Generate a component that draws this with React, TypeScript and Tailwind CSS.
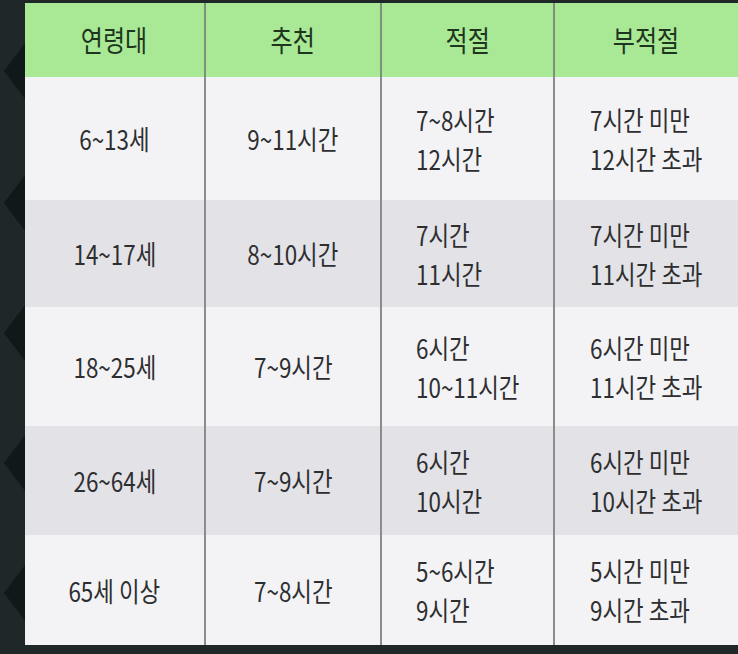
import React from 'react';

type Row = {
  age: string;
  rec: string;
  ok: string[];
  bad: string[];
  shade: boolean;
};

const rows: Row[] = [
  { age: '6~13세', rec: '9~11시간', ok: ['7~8시간', '12시간'], bad: ['7시간 미만', '12시간 초과'], shade: false },
  { age: '14~17세', rec: '8~10시간', ok: ['7시간', '11시간'], bad: ['7시간 미만', '11시간 초과'], shade: true },
  { age: '18~25세', rec: '7~9시간', ok: ['6시간', '10~11시간'], bad: ['6시간 미만', '11시간 초과'], shade: false },
  { age: '26~64세', rec: '7~9시간', ok: ['6시간', '10시간'], bad: ['6시간 미만', '10시간 초과'], shade: true },
  { age: '65세 이상', rec: '7~8시간', ok: ['5~6시간', '9시간'], bad: ['5시간 미만', '9시간 초과'], shade: false },
];

const heights = ['h-[123px]', 'h-[107px]', 'h-[119px]', 'h-[109px]', 'h-[110px]'];

const font = { fontFamily: '"Noto Sans CJK KR", "Noto Sans", sans-serif' };

function Squeeze({ children, left }: { children: React.ReactNode; left?: boolean }) {
  return (
    <span
      className={
        'inline-block whitespace-nowrap scale-x-[0.83] ' + (left ? 'origin-left' : 'origin-center')
      }
    >
      {children}
    </span>
  );
}

export default function App() {
  return (
    <div className="w-[738px] h-[654px] bg-[#1f2729] flex flex-col overflow-hidden" style={font}>
      <div className="h-[3px] shrink-0" />
      <div className="flex flex-1">
        {/* left edge pattern */}
        <div className="w-[25px] shrink-0">
          <svg width="25" height="642" viewBox="0 0 25 642">
            {[68, 200, 330, 460, 590].map((y) => (
              <polygon key={y} points={`25,${y - 28} 4,${y} 25,${y + 28}`} fill="#111819" />
            ))}
          </svg>
        </div>

        <div className="flex-1 flex flex-col">
          {/* header */}
          <div className="h-[74px] bg-[#a9e995] flex text-[29px] text-[#1e3520]">
            <div className="w-[179px] flex items-center justify-center">
              <Squeeze>연령대</Squeeze>
            </div>
            <div className="w-[176px] border-l-2 border-[#7f8f7a] flex items-center justify-center">
              <Squeeze>추천</Squeeze>
            </div>
            <div className="w-[173px] border-l-2 border-[#7f8f7a] flex items-center justify-center">
              <Squeeze>적절</Squeeze>
            </div>
            <div className="flex-1 border-l-2 border-[#7f8f7a] flex items-center justify-center">
              <Squeeze>부적절</Squeeze>
            </div>
          </div>

          {/* body */}
          {rows.map((r, i) => (
            <div
              key={r.age}
              className={
                'flex text-[27px] leading-[39px] text-[#2e2e30] ' +
                heights[i] +
                ' ' +
                (r.shade ? 'bg-[#e2e2e7]' : 'bg-[#f3f3f5]')
              }
            >
              <div className="w-[179px] flex items-center justify-center">
                <Squeeze>{r.age}</Squeeze>
              </div>
              <div className="w-[176px] border-l-2 border-[#8c8c8e] flex items-center justify-center">
                <Squeeze>{r.rec}</Squeeze>
              </div>
              <div className="w-[173px] border-l-2 border-[#8c8c8e] flex flex-col justify-center pl-[34px]">
                {r.ok.map((t) => (
                  <div key={t}>
                    <Squeeze left>{t}</Squeeze>
                  </div>
                ))}
              </div>
              <div className="flex-1 border-l-2 border-[#8c8c8e] flex flex-col justify-center pl-[35px]">
                {r.bad.map((t) => (
                  <div key={t}>
                    <Squeeze left>{t}</Squeeze>
                  </div>
                ))}
              </div>
            </div>
          ))}
        </div>
      </div>
      <div className="h-[9px] shrink-0" />
    </div>
  );
}
